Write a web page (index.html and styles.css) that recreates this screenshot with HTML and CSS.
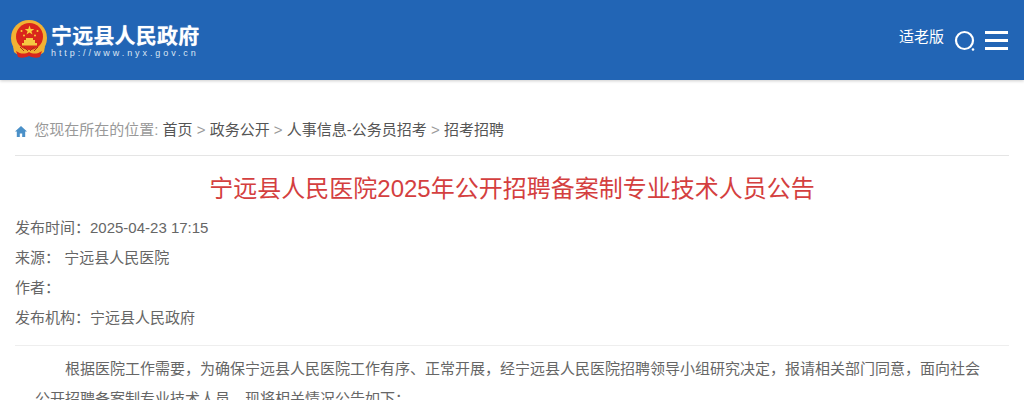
FILE: index.html
```html
<!DOCTYPE html>
<html lang="zh-CN">
<head>
    <meta charset="UTF-8">
    <title>宁远县人民医院2025年公开招聘备案制专业技术人员公告</title>
    <link rel="stylesheet" href="styles.css">
</head>
<body>
    <div class="header">
        <div class="logo">
            <svg class="emblem" width="38" height="40" viewBox="0 0 38 40">
                <circle cx="19" cy="18" r="18" fill="#f2b233"/>
                <circle cx="19.5" cy="16.5" r="13.5" fill="#d9261c"/>
                <polygon points="19.5,5.5 20.7,9 24.3,9 21.4,11.2 22.5,14.6 19.5,12.5 16.5,14.6 17.6,11.2 14.7,9 18.3,9" fill="#f8d13a"/>
                <circle cx="11.5" cy="11" r="1" fill="#f8d13a"/>
                <circle cx="14" cy="15.5" r="1" fill="#f8d13a"/>
                <circle cx="25" cy="15.5" r="1" fill="#f8d13a"/>
                <circle cx="27.5" cy="11" r="1" fill="#f8d13a"/>
                <path d="M12 23h15v2.5H12z M14 20h11v3H14z M16 18h7v2h-7z" fill="#f5c842"/>
                <path d="M3 26c3 3 7 5 16 5s13-2 16-5l-1 6c-3 3-8 4-15 4s-12-1-15-4z" fill="#f2b233"/>
                <path d="M6 31c4 3 9 3.500 13 1 4 2.500 9 2 13-1l-2 6c-3 1-7 1-11-1-4 2-8 2-11 1z" fill="#d9261c"/>
                <path d="M10 27l4 4M14 27l4 4M24 27l-4 4M28 27l-4 4" stroke="#a8321a" stroke-width="1" fill="none"/>
            </svg>
            <div class="logo-text">
                <div class="logo-name">宁远县人民政府</div>
                <div class="logo-url">http://www.nyx.gov.cn</div>
            </div>
        </div>
        <div class="tools">
            <span class="elder">适老版</span>
            <svg class="search-icon" width="22" height="22" viewBox="0 0 22 22">
                <circle cx="10.500" cy="10.500" r="8.500" fill="none" stroke="#fff" stroke-width="2.200"/>
                <circle cx="19" cy="19.500" r="1.300" fill="#fff"/>
            </svg>
            <div class="menu-icon">
                <span></span>
                <span></span>
                <span></span>
            </div>
        </div>
    </div>
    <div class="content">
        <div class="crumbs">
            <svg class="home-icon" width="12" height="11" viewBox="0 0 12 11">
                <path d="M6 0L0 5.500h1.800V11h3V7.500h2.400V11h3V5.500H12z" fill="#4a90c8"/>
            </svg>
            <span class="crumb-label">您现在所在的位置:</span>
            <a href="#">首页</a> <span class="sep">&gt;</span>
            <a href="#">政务公开</a> <span class="sep">&gt;</span>
            <a href="#">人事信息-公务员招考</a> <span class="sep">&gt;</span>
            <a href="#">招考招聘</a>
        </div>
        <h1 class="title">宁远县人民医院2025年公开招聘备案制专业技术人员公告</h1>
        <div class="meta">
            <p>发布时间：2025-04-23 17:15</p>
            <p>来源：&nbsp;宁远县人民医院</p>
            <p>作者：</p>
            <p>发布机构：宁远县人民政府</p>
        </div>
        <div class="article">
            <p>根据医院工作需要，为确保宁远县人民医院工作有序、正常开展，经宁远县人民医院招聘领导小组研究决定，报请相关部门同意，面向社会公开招聘备案制专业技术人员，现将相关情况公告如下：</p>
        </div>
    </div>
</body>
</html>
```

FILE: styles.css
```css
* {
    margin: 0;
    padding: 0;
    box-sizing: border-box;
}
html, body {
    height: 400px;
    overflow: hidden;
}
body {
    font-family: "Liberation Sans", "Noto Sans CJK SC", sans-serif;
    font-size: 15px;
    color: #666;
    background-color: #fff;
}
a {
    color: #555;
    text-decoration: none;
}
.header {
    height: 80px;
    background-color: #2265b5;
    box-shadow: 0 1px 3px rgba(0, 0, 0, 0.2);
    display: flex;
    align-items: center;
    justify-content: space-between;
    padding: 0 16px 0 10px;
}
.logo {
    display: flex;
    align-items: center;
    gap: 3px;
}
.emblem {
    flex: none;
}
.logo-text {
    margin-top: 4px;
}
.logo-name {
    font-size: 21px;
    line-height: 22px;
    letter-spacing: 0.2px;
    font-weight: bold;
    color: #fff;
    text-shadow: 0 0 1px rgba(255, 255, 255, 0.6);
}
.logo-url {
    font-size: 9px;
    line-height: 12px;
    letter-spacing: 2.92px;
    color: #dbe6f4;
}
.tools {
    display: flex;
    align-items: center;
}
.elder {
    color: #fff;
    font-size: 15px;
    margin: 0 10px 9px 0;
}
.search-icon {
    margin-right: 9px;
    margin-top: 2px;
}
.menu-icon {
    width: 23px;
    display: flex;
    flex-direction: column;
    gap: 5px;
    margin-top: 1px;
}
.menu-icon span {
    display: block;
    height: 3px;
    background-color: #fff;
}
.content {
    padding: 0 15px;
}
.crumbs {
    margin-top: 35px;
    height: 41px;
    border-bottom: 1px solid #e5e5e5;
    line-height: 30px;
    white-space: nowrap;
}
.home-icon {
    margin-right: 3px;
    vertical-align: -2px;
}
.crumb-label {
    color: #999;
}
.sep {
    color: #999;
}
.title {
    font-size: 24px;
    font-weight: normal;
    line-height: 32px;
    color: #d43f3f;
    text-align: center;
    margin-top: 17px;
}
.meta {
    margin-top: 8px;
    padding-bottom: 12px;
    border-bottom: 1px solid #eee;
}
.meta p {
    line-height: 30px;
}
.article {
    padding: 8px 29px 0 20px;
}
.article p {
    line-height: 30px;
    text-indent: 30px;
}
```
